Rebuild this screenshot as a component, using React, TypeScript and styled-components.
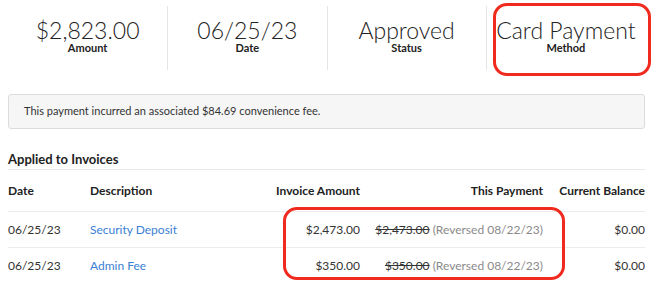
import React from "react";
import styled, { createGlobalStyle } from "styled-components";

const Global = createGlobalStyle`
  html, body { margin: 0; padding: 0; background: #fff; }
  body { font-family: Lato, "Open Sans", Arial, sans-serif; color: #333; }
`;

const Page = styled.div`
  position: relative;
  width: 637px;
  padding: 0 25px 0 8px;
`;

const Stats = styled.div`
  display: grid;
  grid-template-columns: repeat(4, 1fr);
  padding-top: 6px;
`;

const Stat = styled.div<{ $first?: boolean }>`
  position: relative;
  height: 64px;
  box-sizing: border-box;
  padding-top: 14px;
  display: flex;
  flex-direction: column;
  align-items: center;
  border-left: ${(p) => (p.$first ? "none" : "1px solid #e6e6e6")};
`;

const StatValue = styled.div`
  font-size: 23px;
  font-weight: 300;
  line-height: 20px;
  color: #222;
  white-space: nowrap;
`;

const StatLabel = styled.div`
  font-size: 11px;
  font-weight: 700;
  line-height: 11px;
  margin-top: 2px;
  color: #222;
`;

const Highlight = styled.div<{ $top: number; $left: number; $width: number; $height: number }>`
  position: absolute;
  top: ${(p) => p.$top}px;
  left: ${(p) => p.$left}px;
  width: ${(p) => p.$width}px;
  height: ${(p) => p.$height}px;
  box-sizing: border-box;
  border: 3px solid #f02a1e;
  border-radius: 14px;
  pointer-events: none;
`;

const Notice = styled.div`
  margin-top: 24px;
  height: 35px;
  box-sizing: border-box;
  border: 1px solid #dcdcdc;
  border-radius: 3px;
  background: #f6f6f6;
  display: flex;
  align-items: center;
  padding: 0 0 2px 15px;
  font-size: 11px;
  color: #333;
`;

const SectionTitle = styled.div`
  margin-top: 22px;
  font-size: 13px;
  font-weight: 700;
  line-height: 16px;
  padding-bottom: 2px;
  border-bottom: 1px solid #e8e8e8;
  color: #222;
`;

const Row = styled.div<{ $head?: boolean }>`
  display: grid;
  grid-template-columns: 82px 160px 110px 183px 102px;
  align-items: center;
  height: ${(p) => (p.$head ? "41px" : "36px")};
  border-top: ${(p) => (p.$head ? "none" : "1px solid #ececec")};
  box-sizing: ${(p) => (p.$head ? "content-box" : "border-box")};
  font-size: 12px;
  font-weight: ${(p) => (p.$head ? 700 : 400)};
  color: ${(p) => (p.$head ? "#222" : "#333")};
`;

const Cell = styled.div<{ $right?: boolean }>`
  text-align: ${(p) => (p.$right ? "right" : "left")};
  white-space: nowrap;
`;

const Link = styled.a`
  color: #3b7fd3;
  text-decoration: none;
`;

const Struck = styled.span`
  text-decoration: line-through;
`;

const Muted = styled.span`
  color: #8a8a8a;
`;

const Body = styled.div`
  position: relative;
`;

const stats = [
  { value: "$2,823.00", label: "Amount" },
  { value: "06/25/23", label: "Date" },
  { value: "Approved", label: "Status" },
  { value: "Card Payment", label: "Method" },
];

const rows = [
  { date: "06/25/23", desc: "Security Deposit", amount: "$2,473.00", balance: "$0.00" },
  { date: "06/25/23", desc: "Admin Fee", amount: "$350.00", balance: "$0.00" },
];

export default function App() {
  return (
    <>
      <Global />
      <Page>
        <Stats>
          {stats.map((s, i) => (
            <Stat key={s.label} $first={i === 0}>
              <StatValue>{s.value}</StatValue>
              <StatLabel>{s.label}</StatLabel>
              {i === 3 && <Highlight $top={-3} $left={6} $width={158} $height={73} />}
            </Stat>
          ))}
        </Stats>
        <Notice>This payment incurred an associated $84.69 convenience fee.</Notice>
        <SectionTitle>Applied to Invoices</SectionTitle>
        <Row $head>
          <Cell>Date</Cell>
          <Cell>Description</Cell>
          <Cell $right>Invoice Amount</Cell>
          <Cell $right>This Payment</Cell>
          <Cell $right>Current Balance</Cell>
        </Row>
        <Body>
          {rows.map((r) => (
            <Row key={r.desc}>
              <Cell>{r.date}</Cell>
              <Cell>
                <Link href="#">{r.desc}</Link>
              </Cell>
              <Cell $right>{r.amount}</Cell>
              <Cell $right>
                <Struck>{r.amount}</Struck> <Muted>(Reversed 08/22/23)</Muted>
              </Cell>
              <Cell $right>{r.balance}</Cell>
            </Row>
          ))}
          <Highlight $top={-4} $left={275} $width={282} $height={73} />
        </Body>
      </Page>
    </>
  );
}
